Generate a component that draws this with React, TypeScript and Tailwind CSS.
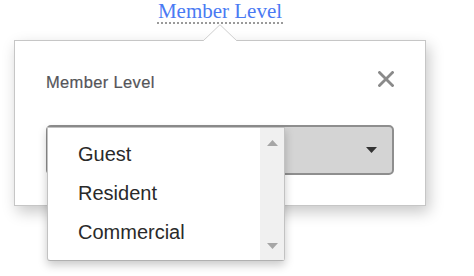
const sans = "font-['Liberation_Sans',Arial,sans-serif]";

const options = ["Guest", "Resident", "Commercial"];

function CloseIcon() {
  return (
    <svg width="16" height="16" viewBox="0 0 16 16" className="block">
      <path d="M1.5 1.5 L14.5 14.5 M14.5 1.5 L1.5 14.5" stroke="#8a8a8a" strokeWidth="2.8" strokeLinecap="square" />
    </svg>
  );
}

function OptionList() {
  return (
    <div className="absolute left-[32px] top-[86px] flex h-[134px] w-[238px] rounded-b-[3px] border border-[#c2c2c2] border-b-[#b0b0b0] bg-white shadow-[0_4px_10px_rgba(0,0,0,0.22)]">
      <ul className={`flex-1 pt-[7px] ${sans} text-[20px] leading-[39px] text-[#2a2a2a]`}>
        {options.map((o) => (
          <li key={o} className="pl-[30px]">
            {o}
          </li>
        ))}
      </ul>
      <div className="flex w-[24px] flex-col items-center justify-between bg-[#f0f0f0] pt-[12px] pb-[11px]">
        <svg width="11" height="6" viewBox="0 0 11 6">
          <path d="M5.5 0 L11 6 L0 6 Z" fill="#a6a6a6" />
        </svg>
        <svg width="11" height="6" viewBox="0 0 11 6">
          <path d="M0 0 L11 0 L5.5 6 Z" fill="#a6a6a6" />
        </svg>
      </div>
    </div>
  );
}

export default function App() {
  return (
    <div className="h-[276px] w-[474px] bg-white pl-[14px]">
      <div className="flex w-[412px] flex-col items-center">
        <span className="inline-block border-b-2 border-dotted border-[#9a9a9a] px-px font-['Liberation_Serif','Times_New_Roman',serif] text-[21px] leading-[22px] text-[#4a7af3]">
          Member Level
        </span>

        <div className="relative mt-[16px] w-full border border-[#c6c6c6] bg-white px-[31px] pt-[31px] pb-[30px] shadow-[3px_6px_14px_rgba(0,0,0,0.22)]">
          {/* pointer */}
          <svg width="34" height="17" viewBox="0 0 34 17" className="absolute left-[188px] top-[-17px]">
            <path d="M0 17 L17 0.7 L34 17 Z" fill="white" stroke="#cfcfcf" strokeWidth="1" />
            <path d="M1 17 L33 17" stroke="white" strokeWidth="2" />
          </svg>

          <div className="flex items-start justify-between">
            <span className={`${sans} text-[16.5px] leading-[20px] tracking-[0.35px] text-[#545559] [-webkit-text-stroke:0.2px_#545559]`}>
              Member Level
            </span>
            <div className="-mt-px">
              <CloseIcon />
            </div>
          </div>

          <div className="mt-[33px] flex h-[50px] items-center justify-end rounded-[5px] border-2 border-[#8e8e8e] bg-[#d4d4d4] pr-[15px]">
            <svg width="11" height="6" viewBox="0 0 11 6">
              <path d="M0 0 L11 0 L5.5 6 Z" fill="#333" />
            </svg>
          </div>

          <OptionList />
        </div>
      </div>
    </div>
  );
}
